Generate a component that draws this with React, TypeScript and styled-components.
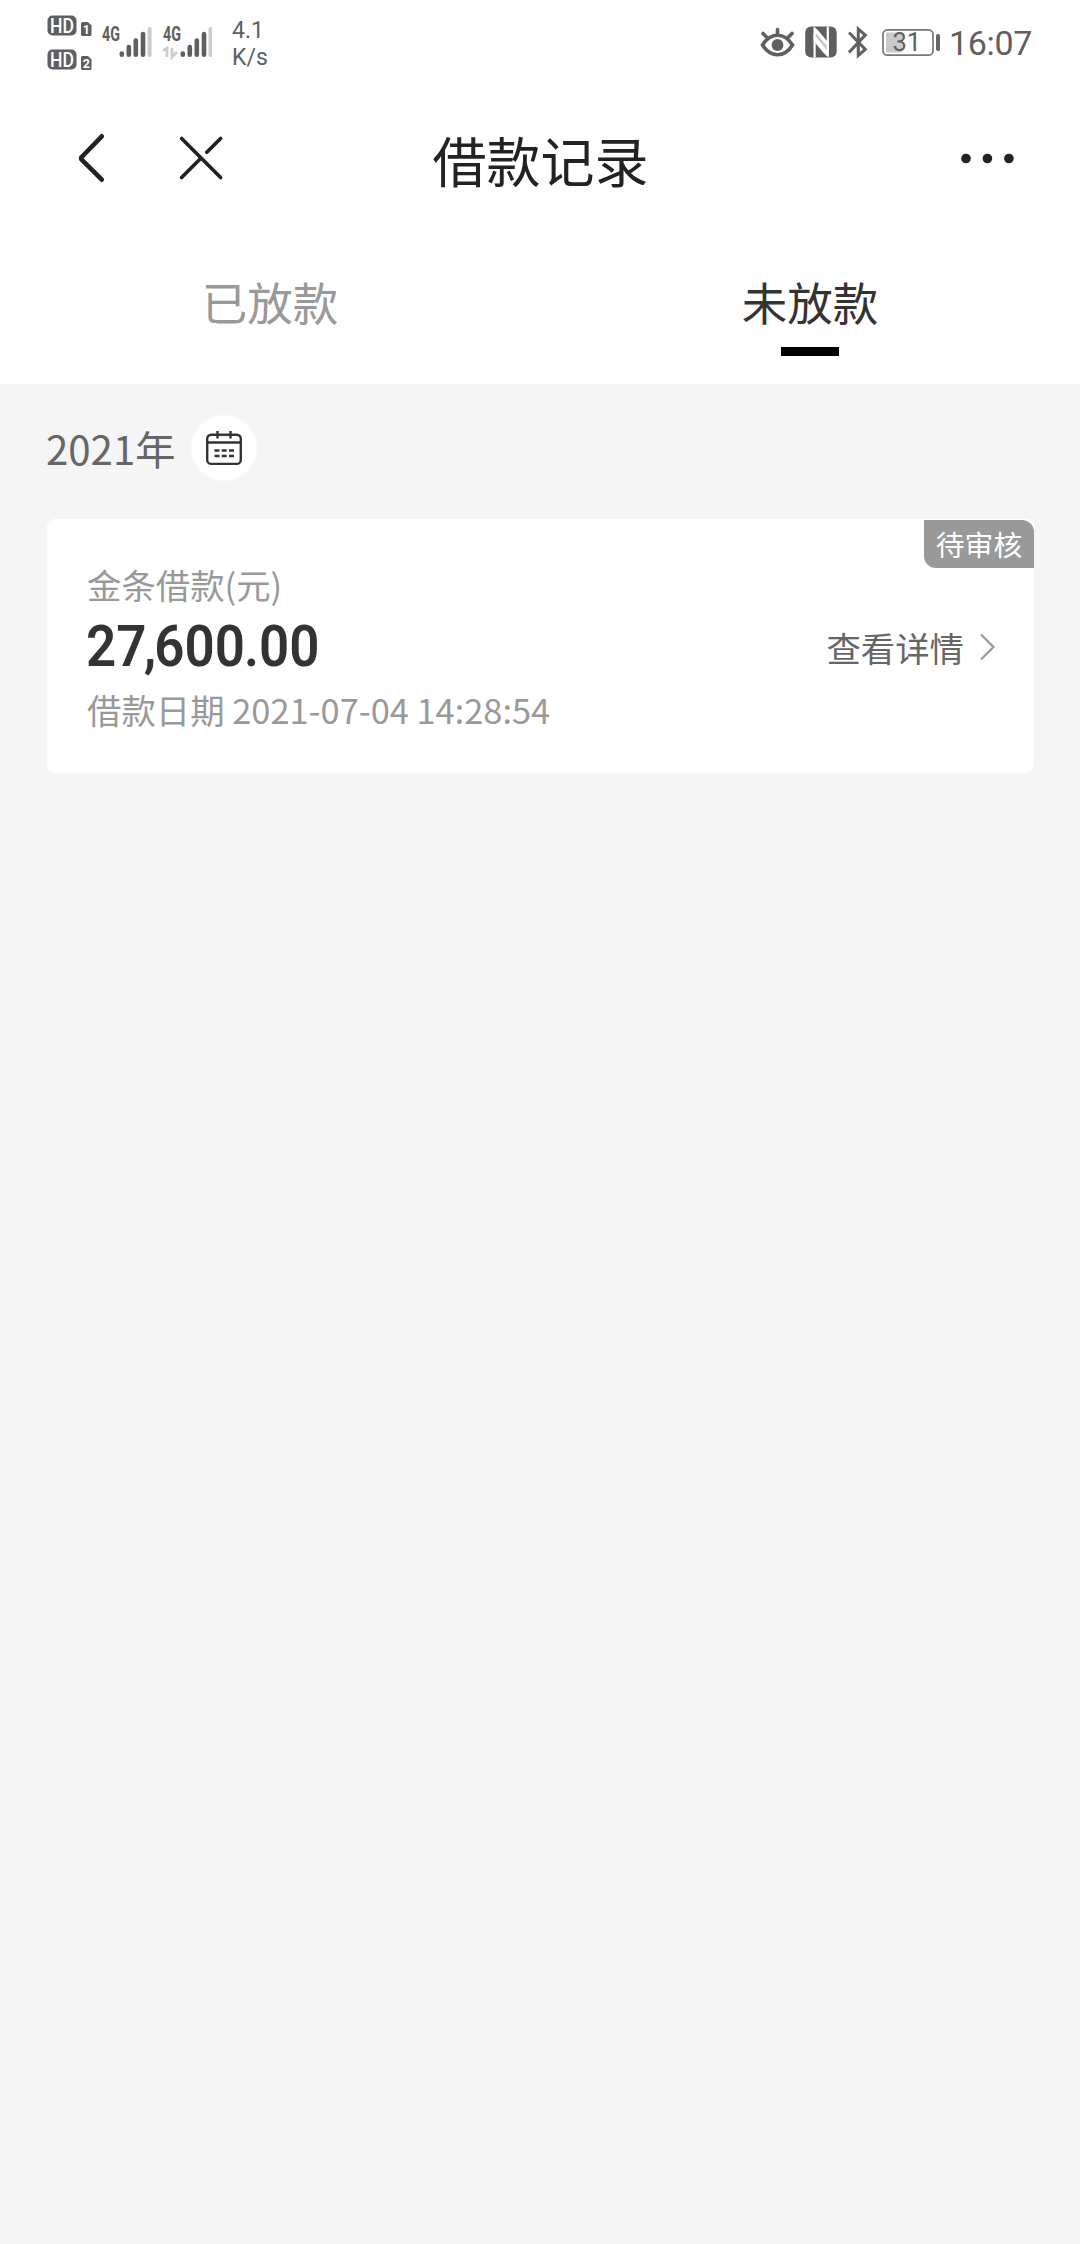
import React from 'react';
import styled, { createGlobalStyle } from 'styled-components';

const GlobalStyle = createGlobalStyle`
  * { box-sizing: border-box; }
  body {
    margin: 0;
    background: #f5f5f5;
    font-family: "Noto Sans CJK SC", "Noto Sans", sans-serif;
  }
`;

const Screen = styled.div`
  width: 1080px;
  height: 2244px;
  background: #f5f5f5;
  overflow: hidden;
`;

const TopArea = styled.div`
  height: 384px;
  background: #fefefe;
`;

const StatusBar = styled.div`
  height: 88px;
  padding: 0 47px;
  display: flex;
  justify-content: space-between;
  color: #5f5f5f;
  font-family: Roboto, sans-serif;
`;

const StatusGroup = styled.div`
  display: flex;
  align-items: flex-start;
`;

const Spacer = styled.div<{ $w: number }>`
  width: ${(p) => p.$w}px;
`;

const Speed = styled.div`
  width: 40px;
  margin: 17px 0 0 20px;
  font-size: 23px;
  line-height: 27px;
`;

const Clock = styled.div`
  width: 84px;
  margin: 23px 0 0 8px;
  font-size: 34px;
  line-height: 40px;
  letter-spacing: -0.3px;
`;

const NavBar = styled.header`
  height: 140px;
  padding: 0 64px 0 72px;
  display: grid;
  grid-template-columns: 170px 1fr 170px;
  align-items: center;
`;

const NavIcons = styled.div`
  display: flex;
  gap: 64px;
`;

const Title = styled.h1`
  margin: 4px 0 0 -7px;
  text-align: center;
  font-size: 54px;
  line-height: 80px;
  font-weight: 400;
  color: #222;
`;

const MoreButton = styled.div`
  display: flex;
  justify-content: flex-end;
`;

const Tabs = styled.nav`
  display: grid;
  grid-template-columns: 1fr 1fr;
`;

const Tab = styled.div<{ $active?: boolean }>`
  height: 156px;
  padding-top: 39px;
  display: flex;
  flex-direction: column;
  align-items: center;
  font-size: 45.5px;
  line-height: 68px;
  color: ${(p) => (p.$active ? '#333' : '#999')};
`;

const Underline = styled.div`
  width: 58px;
  height: 9px;
  margin-top: 12px;
  background: #000;
`;

const YearRow = styled.div`
  height: 135px;
  padding: 0 0 7px 46px;
  display: flex;
  align-items: center;
  gap: 17px;
  font-size: 40.2px;
  color: #666;
`;

const Year = styled.span`
  line-height: 60px;
`;

const CalendarButton = styled.div`
  width: 64px;
  height: 64px;
  border-radius: 50%;
  background: #fff;
  box-shadow: 0 0 4px #fff;
  display: flex;
  align-items: center;
  justify-content: center;
`;

const Card = styled.article`
  position: relative;
  width: 987px;
  height: 254px;
  margin-left: 47px;
  padding: 38px 37px 0 40px;
  border-radius: 8px;
  background: #fff;
  display: flex;
  justify-content: space-between;
`;

const Badge = styled.div`
  position: absolute;
  top: 1px;
  right: 0;
  width: 110px;
  height: 48px;
  border-radius: 0 12px 0 12px;
  background: #999;
  color: #fff;
  font-size: 28.8px;
  line-height: 48px;
  text-align: center;
`;

const Details = styled.div`
  display: flex;
  flex-direction: column;
`;

const Caption = styled.div`
  font-size: 34.4px;
  line-height: 54px;
  color: #999;
`;

const Amount = styled.div`
  height: 71px;
  margin-left: -1px;
  font-family: Roboto, sans-serif;
  font-size: 57.5px;
  line-height: 71px;
  font-weight: 600;
  color: #333;
  transform: scaleX(0.92);
  transform-origin: left;
`;

const Mark = styled.span<{ $tight?: boolean }>`
  margin: ${(p) => (p.$tight ? '0 -2px 0 -3px' : '0 0 0 -1px')};
`;

const DetailLink = styled.div`
  height: 54px;
  margin-top: 63px;
  display: flex;
  align-items: center;
  gap: 13px;
  font-size: 34.4px;
  color: #666;
`;

const HdText = styled.text`
  font: 500 19.5px Roboto, sans-serif;
  fill: #fff;
`;

const SimText = styled.text`
  font: 700 12.5px Roboto, sans-serif;
  fill: #fff;
`;

const NetText = styled.text`
  font: 700 20px Roboto, sans-serif;
  fill: #5f5f5f;
`;

const BatteryText = styled.text`
  font: 400 25.5px Roboto, sans-serif;
  fill: #5f5f5f;
`;

const HdSims = () => (
  <svg width="46" height="88" viewBox="47 0 46 88">
    {[1, 2].map((n) => (
      <g key={n} transform={`translate(0 ${(n - 1) * 34})`}>
        <rect x="47.5" y="15.5" width="29" height="20" rx="5" fill="#5f5f5f" />
        <HdText x="50" y="32.5" textLength="24" lengthAdjust="spacingAndGlyphs">HD</HdText>
        <path d="M82 22h6l3.5 3.5V35l-1 1H82l-1-1V23z" fill="#5f5f5f" />
        <SimText x="82.7" y="33.8">{n}</SimText>
      </g>
    ))}
  </svg>
);

const Signal = ({ data }: { data?: boolean }) => (
  <svg width={data ? 58 : 61} height="88" viewBox={`0 0 ${data ? 58 : 61} 88`}>
    <NetText x="9" y="41" textLength="18" lengthAdjust="spacingAndGlyphs">4G</NetText>
    <g stroke="#5f5f5f" strokeWidth="4.6" strokeLinecap="round">
      <path d="M28.8 53.6v1.2M35.8 47v7.7M42.8 40.5v14.2M50 34v20.7" />
      <path d="M56.6 29v26" stroke="#ccc" strokeWidth="4" />
    </g>
    {data && <path d="M9 51l4-3v9M18 48v9l5-5" fill="none" stroke="#ccc" strokeWidth="2.8" />}
  </svg>
);

const EyeIcon = () => (
  <svg width="36" height="88" viewBox="760 0 36 88" fill="none" stroke="#5f5f5f" strokeWidth="3.6" strokeLinecap="round">
    <path d="M762.5 45c8-13 22-13 30 0c-8 13-22 13-30 0z" />
    <circle cx="777.5" cy="45" r="5.9" fill="#5f5f5f" stroke="none" />
    <path d="M777.5 34v-4.5M767 37.5l-4-4M788 37.5l4-4" />
  </svg>
);

const NfcIcon = () => (
  <svg width="32" height="88" viewBox="805 0 32 88">
    <rect x="805.2" y="26.5" width="31.5" height="31" rx="6" fill="#5f5f5f" />
    <path d="M814.6 57.5V34M827.8 26.5V50" fill="none" stroke="#fefefe" strokeWidth="2.2" />
    <path d="M813.5 27c4 1 7 7 15.4 16V57c-4-1-7-7-15.4-16z" fill="#fefefe" />
    <path d="M815.8 36.5l10.8 13.5v-4.5L815.8 33z" fill="#5f5f5f" opacity="0.35" />
  </svg>
);

const BluetoothIcon = () => (
  <svg width="20" height="88" viewBox="848 0 20 88" fill="none" stroke="#5f5f5f" strokeWidth="3">
    <path d="M849 32.5l16.3 17-7 6V29l7 6L849 52.5" />
  </svg>
);

const BatteryIcon = () => (
  <svg width="60" height="88" viewBox="881 0 60 88">
    <rect x="883" y="29.8" width="50" height="25.4" rx="4.5" fill="none" stroke="#777" strokeWidth="1.7" />
    <rect x="886" y="32.5" width="16" height="20" fill="#c9c9c9" />
    <rect x="936" y="34" width="4" height="17" rx="1.7" fill="#666" />
    <BatteryText x="892.5" y="51.2">31</BatteryText>
  </svg>
);

const BackIcon = () => (
  <svg width="40" height="56" viewBox="72 130 40 56" fill="none" stroke="#222" strokeWidth="4.6" strokeLinecap="round" strokeLinejoin="round">
    <path d="M101.8 136.3L81.2 157.5v1.6l20.6 20.6" />
  </svg>
);

const CloseIcon = () => (
  <svg width="48" height="56" viewBox="176 130 48 56" fill="none" stroke="#222" strokeWidth="3.7" strokeLinecap="round">
    <path d="M181.6 138.5l39 39M181.6 177.5l19.5-19.5M206.8 152.3l13.8-13.8" />
  </svg>
);

const MoreIcon = () => (
  <svg width="60" height="20" viewBox="956 148 60 20" fill="#222">
    <circle cx="966" cy="158.5" r="4.8" />
    <circle cx="987.4" cy="158.5" r="4.8" />
    <circle cx="1008.9" cy="158.5" r="4.8" />
  </svg>
);

const CalendarIcon = () => (
  <svg width="36" height="36" viewBox="0 0 36 36" fill="none" stroke="#333" strokeWidth="2.4">
    <rect x="1.2" y="4.7" width="33.6" height="29.2" rx="4" />
    <path d="M1.2 12.5h33.6M11.5 1v7.5M24.5 1v7.5" />
    <path d="M8.5 20.5h5M15.7 20.5h5M23 20.5h5M8.5 26h5M15.7 26h5M23 26h5" />
  </svg>
);

const ChevronIcon = () => (
  <svg width="20" height="30" viewBox="0 0 20 30" fill="none" stroke="#999" strokeWidth="2.2">
    <path d="M4 2.5L16.5 15 4 27.5" />
  </svg>
);

export default function App() {
  return (
    <Screen>
      <GlobalStyle />
      <TopArea>
        <StatusBar>
          <StatusGroup>
            <HdSims />
            <Signal />
            <Signal data />
            <Speed>4.1<br />K/s</Speed>
          </StatusGroup>
          <StatusGroup>
            <EyeIcon />
            <Spacer $w={9} />
            <NfcIcon />
            <Spacer $w={11} />
            <BluetoothIcon />
            <Spacer $w={13} />
            <BatteryIcon />
            <Clock>16:07</Clock>
          </StatusGroup>
        </StatusBar>
        <NavBar>
          <NavIcons>
            <BackIcon />
            <CloseIcon />
          </NavIcons>
          <Title>借款记录</Title>
          <MoreButton>
            <MoreIcon />
          </MoreButton>
        </NavBar>
        <Tabs>
          <Tab>已放款</Tab>
          <Tab $active>
            未放款
            <Underline />
          </Tab>
        </Tabs>
      </TopArea>
      <YearRow>
        <Year>2021年</Year>
        <CalendarButton>
          <CalendarIcon />
        </CalendarButton>
      </YearRow>
      <Card>
        <Details>
          <Caption>金条借款(元)</Caption>
          <Amount>27<Mark $tight>,</Mark>600<Mark>.</Mark>00</Amount>
          <Caption>借款日期 2021-07-04 14:28:54</Caption>
        </Details>
        <DetailLink>
          查看详情
          <ChevronIcon />
        </DetailLink>
        <Badge>待审核</Badge>
      </Card>
    </Screen>
  );
}
